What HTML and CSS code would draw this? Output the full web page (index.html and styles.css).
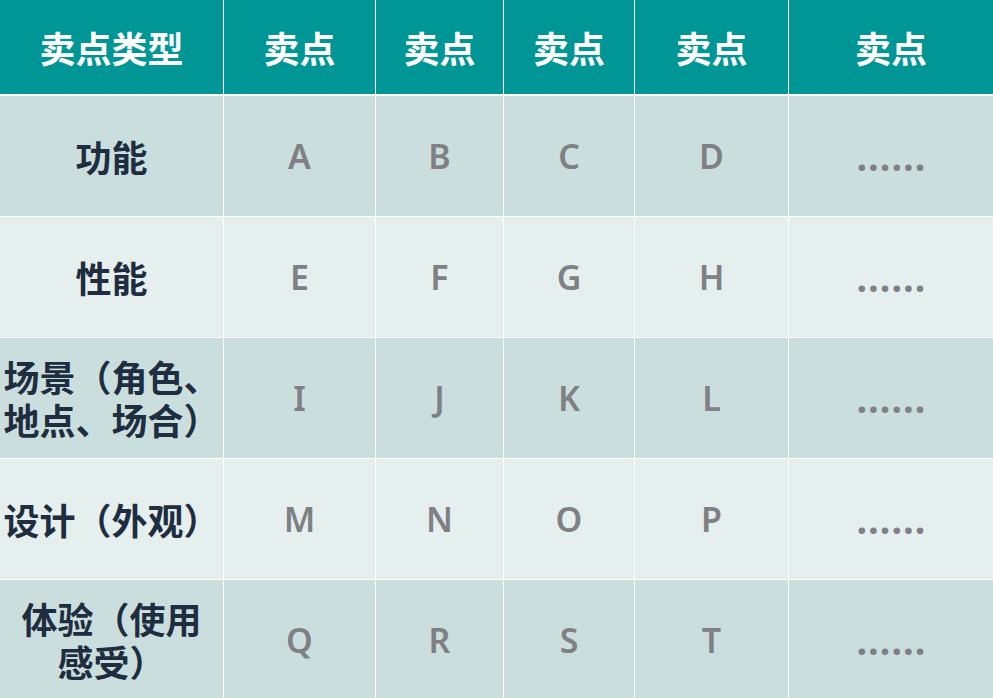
FILE: index.html
```html
<!DOCTYPE html>
<html lang="zh-CN">
<head>
<meta charset="utf-8">
<link rel="stylesheet" href="styles.css">
</head>
<body>
<div class="table">
  <div class="cell head">卖点类型</div>
  <div class="cell head">卖点</div>
  <div class="cell head">卖点</div>
  <div class="cell head">卖点</div>
  <div class="cell head">卖点</div>
  <div class="cell head">卖点</div>

  <div class="cell odd type">功能</div>
  <div class="cell odd val">A</div>
  <div class="cell odd val">B</div>
  <div class="cell odd val">C</div>
  <div class="cell odd val">D</div>
  <div class="cell odd val more">……</div>

  <div class="cell even type">性能</div>
  <div class="cell even val">E</div>
  <div class="cell even val">F</div>
  <div class="cell even val">G</div>
  <div class="cell even val">H</div>
  <div class="cell even val more">……</div>

  <div class="cell odd type">场景（角色、<br>地点、场合）</div>
  <div class="cell odd val">I</div>
  <div class="cell odd val">J</div>
  <div class="cell odd val">K</div>
  <div class="cell odd val">L</div>
  <div class="cell odd val more">……</div>

  <div class="cell even type">设计（外观）</div>
  <div class="cell even val">M</div>
  <div class="cell even val">N</div>
  <div class="cell even val">O</div>
  <div class="cell even val">P</div>
  <div class="cell even val more">……</div>

  <div class="cell odd type">体验（使用<br>感受）</div>
  <div class="cell odd val">Q</div>
  <div class="cell odd val">R</div>
  <div class="cell odd val">S</div>
  <div class="cell odd val">T</div>
  <div class="cell odd val more">……</div>
</div>
</body>
</html>
```
FILE: styles.css
```css
html, body {
  margin: 0;
  padding: 0;
  background: #ffffff;
}
body {
  font-family: "Noto Sans CJK SC", sans-serif;
  overflow: hidden;
}
.table {
  display: grid;
  grid-template-columns: 223px 151px 127px 130px 153px 1fr;
  grid-template-rows: 95px repeat(5, 120px);
  column-gap: 1px;
  row-gap: 1px;
  background: #ffffff;
}
.cell {
  display: flex;
  align-items: center;
  justify-content: center;
  text-align: center;
}
.head {
  background: #009696;
  color: #ffffff;
  font-family: "Noto Sans CJK SC", sans-serif;
  font-weight: 700;
  font-size: 36px;
  margin-bottom: 1px;
}
.odd {
  background: #cbdede;
}
.even {
  background: #e5efee;
}
.type {
  color: #1f2d40;
  font-family: "Noto Sans CJK SC", sans-serif;
  font-weight: 700;
  font-size: 36px;
  line-height: 43px;
  white-space: nowrap;
}
.val {
  color: #808084;
  font-family: "Noto Sans", sans-serif;
  font-weight: 600;
  font-size: 34px;
}
.more {
  font-size: 42px;
  line-height: 1;
  padding-bottom: 2px;
}
```
